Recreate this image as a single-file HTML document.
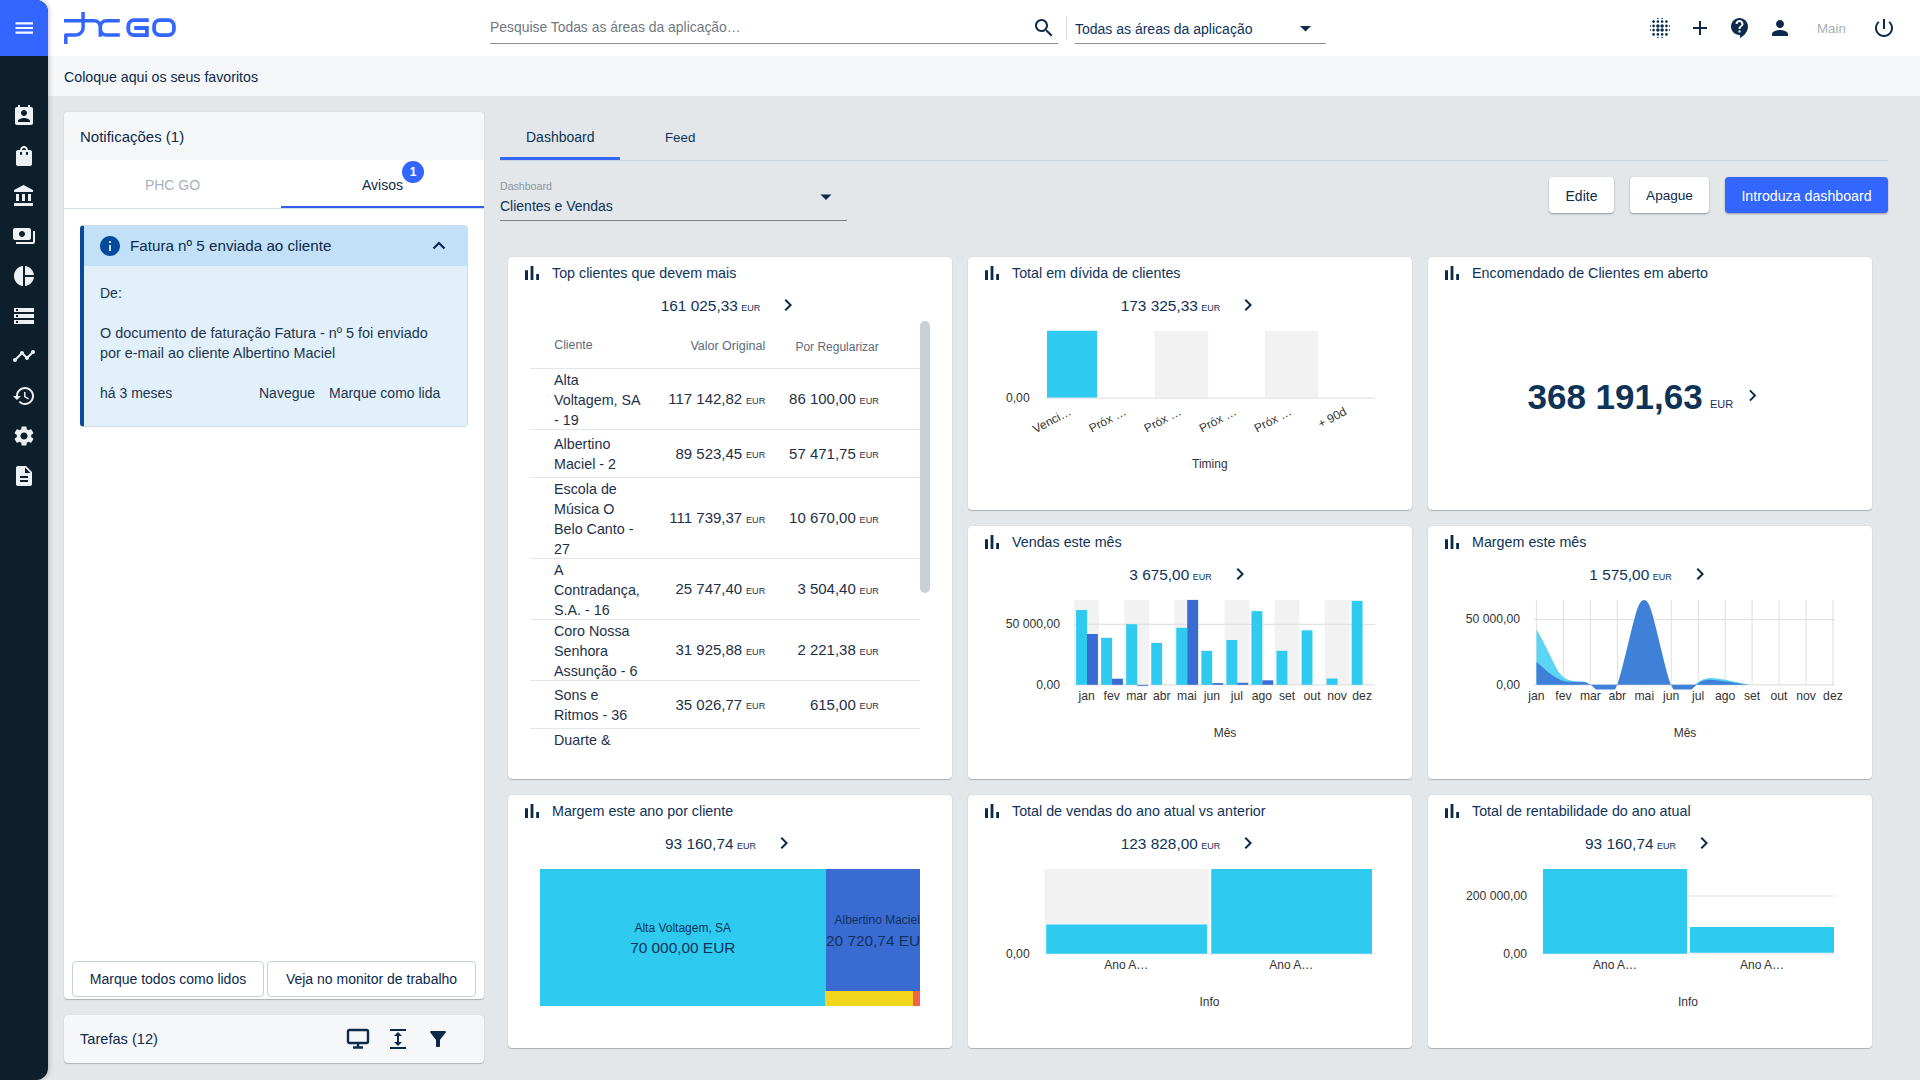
<!DOCTYPE html>
<html><head><meta charset="utf-8">
<style>
*{box-sizing:border-box;margin:0;padding:0}
html,body{width:1920px;height:1080px;overflow:hidden}
body{background:#e3e7ea;font-family:"Liberation Sans",sans-serif;color:#0b2a4c;position:relative;font-size:14px}
.a{position:absolute}
.nw{white-space:nowrap}
#side{left:0;top:0;width:48px;height:1080px;background:#0e1f2c;border-radius:0 12px 12px 0;overflow:hidden;z-index:5;box-shadow:1px 0 5px rgba(0,0,0,.22)}
#side .top{position:absolute;left:0;top:0;width:48px;height:56px;background:#3366ff}
#hdr{left:0;top:0;width:1920px;height:56px;background:#fff}
#fav{left:0;top:56px;width:1920px;height:40px;background:#f5f6f8}
.card{position:absolute;background:#fff;border-radius:4px;box-shadow:0 1px 1px rgba(0,0,0,.22),0 0 1px rgba(0,0,0,.18)}
</style></head><body>

<!-- header -->
<div id="hdr" class="a">
  <!-- logo -->
  <svg class="a" style="left:60px;top:8px" width="124" height="40" viewBox="60 8 124 40">
    <g fill="none" stroke="#3366ff" stroke-width="3.5">
      <path d="M64 20.7 H94.3 A6 6 0 0 1 100.3 26.7 V36.7"/>
      <path d="M119.8 20.7 H106.3 A6 6 0 0 0 100.3 26.7"/>
      <path d="M100.3 28.9 A6 6 0 0 0 106.3 34.9 H119.8"/>
      <path d="M83.07 12.1 V27.9 A7 7 0 0 1 76.07 34.9 H65.8 V44" stroke-linejoin="round"/>
    </g>
    <g fill="none" stroke="#3366ff" stroke-width="3.8">
      <path d="M148.8 20.1 H134 A5.7 5.7 0 0 0 128.3 25.8 V29.4 A5.7 5.7 0 0 0 134 35.1 H146.9 V28 H134.2"/>
      <path d="M159.8 20.1 H168.2 A5.7 5.7 0 0 1 173.9 25.8 V29.4 A5.7 5.7 0 0 1 168.2 35.1 H159.8 A5.7 5.7 0 0 1 154.1 29.4 V25.8 A5.7 5.7 0 0 1 159.8 20.1 Z"/>
    </g>
  </svg>
  <div class="a nw" style="left:490px;top:19px;font-size:13.9px;color:#6f7780">Pesquise Todas as áreas da aplicação…</div>
  <div class="a" style="left:490px;top:43px;width:568px;height:1px;background:#8e8e8e"></div>
  <svg class="a" style="left:1032px;top:16px" width="24" height="24" viewBox="0 0 24 24"><path fill="#0b2a4c" d="M15.5 14h-.79l-.28-.27C15.41 12.59 16 11.11 16 9.5 16 5.91 13.09 3 9.5 3S3 5.910 3 9.5 5.91 16 9.5 16c1.61 0 3.09-.59 4.23-1.57l.27.28v.79l5 4.99L20.49 19l-4.99-5zm-6 0C7.01 14 5 11.99 5 9.5S7.01 5 9.5 5 14 7.01 14 9.5 11.99 14 9.5 14z"/></svg>
  <div class="a" style="left:1066px;top:16px;width:1px;height:24px;background:#dcdcdc"></div>
  <div class="a nw" style="left:1075px;top:21px;font-size:14px;color:#0b3560">Todas as áreas da aplicação</div>
  <svg class="a" style="left:1299.5px;top:25px" width="12" height="8"><path d="M0 1 H11 L5.5 6.5Z" fill="#0b2a4c"/></svg>
  <div class="a" style="left:1075px;top:43px;width:251px;height:1px;background:#8e8e8e"></div>
  <!-- right icons -->
  <svg class="a" style="left:1646px;top:14px" width="28" height="28" viewBox="0 0 28 28" fill="#0b2a4c"><circle cx="11.9" cy="4.5" r="0.75"/><circle cx="16.1" cy="4.5" r="0.75"/><circle cx="7.6" cy="7.6" r="1.3"/><circle cx="11.9" cy="7.6" r="1.3"/><circle cx="16.1" cy="7.6" r="1.3"/><circle cx="20.4" cy="7.6" r="1.3"/><circle cx="4.5" cy="11.9" r="0.75"/><circle cx="7.6" cy="11.9" r="1.3"/><circle cx="11.9" cy="11.9" r="1.75"/><circle cx="16.1" cy="11.9" r="1.75"/><circle cx="20.4" cy="11.9" r="1.3"/><circle cx="23.5" cy="11.9" r="0.75"/><circle cx="4.5" cy="16.1" r="0.75"/><circle cx="7.6" cy="16.1" r="1.3"/><circle cx="11.9" cy="16.1" r="1.75"/><circle cx="16.1" cy="16.1" r="1.75"/><circle cx="20.4" cy="16.1" r="1.3"/><circle cx="23.5" cy="16.1" r="0.75"/><circle cx="7.6" cy="20.4" r="1.3"/><circle cx="11.9" cy="20.4" r="1.3"/><circle cx="16.1" cy="20.4" r="1.3"/><circle cx="20.4" cy="20.4" r="1.3"/><circle cx="11.9" cy="23.5" r="0.75"/><circle cx="16.1" cy="23.5" r="0.75"/></svg>
  <svg class="a" style="left:1688px;top:16px" width="24" height="24" viewBox="0 0 24 24"><path fill="#0b2a4c" d="M19 13h-6v6h-2v-6H5v-2h6V5h2v6h6v2z"/></svg>
  <svg class="a" style="left:1728px;top:16px" width="24" height="24" viewBox="0 0 24 24"><path fill="#0b2a4c" d="M11.5 2C6.81 2 3 5.81 3 10.5S6.81 19 11.5 19h.5v3c4.86-2.34 8-7 8-11.5C20 5.81 16.19 2 11.5 2zm1 14.5h-2v-2h2v2zm0-3.5h-2c0-3.25 3-3 3-5 0-1.1-.9-2-2-2s-2 .9-2 2h-2c0-2.21 1.79-4 4-4s4 1.790 4 4c0 2.5-3 2.75-3 5z"/></svg>
  <svg class="a" style="left:1768px;top:16px" width="24" height="24" viewBox="0 0 24 24"><path fill="#0b2a4c" d="M12 12c2.21 0 4-1.79 4-4s-1.79-4-4-4-4 1.79-4 4 1.79 4 4 4zm0 2c-2.67 0-8 1.34-8 4v2h16v-2c0-2.66-5.33-4-8-4z"/></svg>
  <div class="a nw" style="left:1817px;top:21px;font-size:13.3px;color:#a9b0b8">Main</div>
  <svg class="a" style="left:1872px;top:16px" width="24" height="24" viewBox="0 0 24 24"><path fill="#0b2a4c" d="M13 3h-2v10h2V3zm4.83 2.17l-1.42 1.42C17.99 7.86 19 9.81 19 12c0 3.87-3.13 7-7 7s-7-3.13-7-7c0-2.19 1.01-4.14 2.58-5.42L6.17 5.17C4.23 6.82 3 9.26 3 12c0 4.97 4.03 9 9 9s9-4.03 9-9c0-2.74-1.23-5.18-3.17-6.83z"/></svg>
</div>

<!-- favorites -->
<div id="fav" class="a"><div class="a nw" style="left:64px;top:13px;font-size:14.2px;color:#0b2a4c">Coloque aqui os seus favoritos</div></div>


<!-- MAIN START -->
<div class="a nw" style="left:526.00px;top:129.11px;font-size:14px;color:#0e3358;">Dashboard</div>
<div class="a nw" style="left:665.00px;top:129.75px;font-size:13.3px;color:#0e3358;">Feed</div>
<div class="a" style="left:500.00px;top:160.00px;width:1388.00px;height:1.00px;background:#c9d3dc;"></div>
<div class="a" style="left:500.00px;top:157.00px;width:120.00px;height:3.00px;background:#3366ff;"></div>
<div class="a nw" style="left:500.00px;top:180.14px;font-size:10.6px;color:#8a96a2;">Dashboard</div>
<div class="a nw" style="left:500.00px;top:197.91px;font-size:14px;color:#0e3358;">Clientes e Vendas</div>
<div class="a" style="left:500.00px;top:219.50px;width:347.00px;height:1.00px;background:#7f7f7f;"></div>
<svg class="a" style="left:820px;top:194px" width="12" height="7" viewBox="0 0 12 7"><path d="M0.5 0.5H11.5L6 6Z" fill="#0b2a4c"/></svg>
<div class="a" style="left:1549px;top:177px;width:65px;height:36px;background:#fff;border-radius:4px;box-shadow:0 1px 2px rgba(0,0,0,.35)"></div>
<div class="a" style="left:1630px;top:177px;width:79px;height:36px;background:#fff;border-radius:4px;box-shadow:0 1px 2px rgba(0,0,0,.35)"></div>
<div class="a" style="left:1725px;top:177px;width:163px;height:36px;background:#3366ff;border-radius:4px;box-shadow:0 1px 2px rgba(0,0,0,.35)"></div>
<div class="a nw" style="left:1281.50px;width:600px;text-align:center;top:188.11px;font-size:14px;color:#0b2a4c;">Edite</div>
<div class="a nw" style="left:1369.50px;width:600px;text-align:center;top:188.47px;font-size:13.6px;color:#0b2a4c;">Apague</div>
<div class="a nw" style="left:1506.50px;width:600px;text-align:center;top:187.92px;font-size:14.2px;color:#ffffff;">Introduza dashboard</div>
<div class="card" style="left:508px;top:257px;width:444px;height:522px"></div>
<svg class="a" style="left:520px;top:261px" width="24" height="24" viewBox="0 0 24 24"><path fill="#0b2a4c" d="M5 9.2h3V19H5zM10.6 5h2.8v14h-2.8zm5.6 8H19v6h-2.8z"/></svg>
<div class="a nw" style="left:552.00px;top:264.73px;font-size:14.3px;color:#0e3358;">Top clientes que devem mais</div>
<div class="a nw" style="left:660.76px;top:297.07px;font-size:15.4px;color:#0e3358;">161 025,33</div>
<div class="a nw" style="left:741.33px;top:302.96px;font-size:9px;color:#0e3358;">EUR</div>
<svg class="a" style="left:776.25px;top:293.20px" width="24" height="24" viewBox="0 0 24 24"><path fill="#0b2a4c" d="M10 6L8.59 7.41 13.17 12l-4.58 4.59L10 18l6-6z"/></svg>
<div class="card" style="left:968px;top:257px;width:444px;height:253px"></div>
<svg class="a" style="left:980px;top:261px" width="24" height="24" viewBox="0 0 24 24"><path fill="#0b2a4c" d="M5 9.2h3V19H5zM10.6 5h2.8v14h-2.8zm5.6 8H19v6h-2.8z"/></svg>
<div class="a nw" style="left:1012.00px;top:264.73px;font-size:14.3px;color:#0e3358;">Total em dívida de clientes</div>
<div class="a nw" style="left:1120.76px;top:297.07px;font-size:15.4px;color:#0e3358;">173 325,33</div>
<div class="a nw" style="left:1201.33px;top:302.96px;font-size:9px;color:#0e3358;">EUR</div>
<svg class="a" style="left:1236.25px;top:293.20px" width="24" height="24" viewBox="0 0 24 24"><path fill="#0b2a4c" d="M10 6L8.59 7.41 13.17 12l-4.58 4.59L10 18l6-6z"/></svg>
<div class="card" style="left:1428px;top:257px;width:444px;height:253px"></div>
<svg class="a" style="left:1440px;top:261px" width="24" height="24" viewBox="0 0 24 24"><path fill="#0b2a4c" d="M5 9.2h3V19H5zM10.6 5h2.8v14h-2.8zm5.6 8H19v6h-2.8z"/></svg>
<div class="a nw" style="left:1472.00px;top:264.73px;font-size:14.3px;color:#0e3358;">Encomendado de Clientes em aberto</div>
<div class="card" style="left:968px;top:526px;width:444px;height:253px"></div>
<svg class="a" style="left:980px;top:530px" width="24" height="24" viewBox="0 0 24 24"><path fill="#0b2a4c" d="M5 9.2h3V19H5zM10.6 5h2.8v14h-2.8zm5.6 8H19v6h-2.8z"/></svg>
<div class="a nw" style="left:1012.00px;top:533.73px;font-size:14.3px;color:#0e3358;">Vendas este mês</div>
<div class="a nw" style="left:1129.33px;top:566.07px;font-size:15.4px;color:#0e3358;">3 675,00</div>
<div class="a nw" style="left:1192.77px;top:571.96px;font-size:9px;color:#0e3358;">EUR</div>
<svg class="a" style="left:1227.68px;top:562.20px" width="24" height="24" viewBox="0 0 24 24"><path fill="#0b2a4c" d="M10 6L8.59 7.41 13.17 12l-4.58 4.59L10 18l6-6z"/></svg>
<div class="card" style="left:1428px;top:526px;width:444px;height:253px"></div>
<svg class="a" style="left:1440px;top:530px" width="24" height="24" viewBox="0 0 24 24"><path fill="#0b2a4c" d="M5 9.2h3V19H5zM10.6 5h2.8v14h-2.8zm5.6 8H19v6h-2.8z"/></svg>
<div class="a nw" style="left:1472.00px;top:533.73px;font-size:14.3px;color:#0e3358;">Margem este mês</div>
<div class="a nw" style="left:1589.33px;top:566.07px;font-size:15.4px;color:#0e3358;">1 575,00</div>
<div class="a nw" style="left:1652.77px;top:571.96px;font-size:9px;color:#0e3358;">EUR</div>
<svg class="a" style="left:1687.68px;top:562.20px" width="24" height="24" viewBox="0 0 24 24"><path fill="#0b2a4c" d="M10 6L8.59 7.41 13.17 12l-4.58 4.59L10 18l6-6z"/></svg>
<div class="card" style="left:508px;top:795px;width:444px;height:253px"></div>
<svg class="a" style="left:520px;top:799px" width="24" height="24" viewBox="0 0 24 24"><path fill="#0b2a4c" d="M5 9.2h3V19H5zM10.6 5h2.8v14h-2.8zm5.6 8H19v6h-2.8z"/></svg>
<div class="a nw" style="left:552.00px;top:802.73px;font-size:14.3px;color:#0e3358;">Margem este ano por cliente</div>
<div class="a nw" style="left:665.05px;top:835.07px;font-size:15.4px;color:#0e3358;">93 160,74</div>
<div class="a nw" style="left:737.05px;top:840.96px;font-size:9px;color:#0e3358;">EUR</div>
<svg class="a" style="left:771.96px;top:831.20px" width="24" height="24" viewBox="0 0 24 24"><path fill="#0b2a4c" d="M10 6L8.59 7.41 13.17 12l-4.58 4.59L10 18l6-6z"/></svg>
<div class="card" style="left:968px;top:795px;width:444px;height:253px"></div>
<svg class="a" style="left:980px;top:799px" width="24" height="24" viewBox="0 0 24 24"><path fill="#0b2a4c" d="M5 9.2h3V19H5zM10.6 5h2.8v14h-2.8zm5.6 8H19v6h-2.8z"/></svg>
<div class="a nw" style="left:1012.00px;top:802.73px;font-size:14.3px;color:#0e3358;">Total de vendas do ano atual vs anterior</div>
<div class="a nw" style="left:1120.76px;top:835.07px;font-size:15.4px;color:#0e3358;">123 828,00</div>
<div class="a nw" style="left:1201.33px;top:840.96px;font-size:9px;color:#0e3358;">EUR</div>
<svg class="a" style="left:1236.25px;top:831.20px" width="24" height="24" viewBox="0 0 24 24"><path fill="#0b2a4c" d="M10 6L8.59 7.41 13.17 12l-4.58 4.59L10 18l6-6z"/></svg>
<div class="card" style="left:1428px;top:795px;width:444px;height:253px"></div>
<svg class="a" style="left:1440px;top:799px" width="24" height="24" viewBox="0 0 24 24"><path fill="#0b2a4c" d="M5 9.2h3V19H5zM10.6 5h2.8v14h-2.8zm5.6 8H19v6h-2.8z"/></svg>
<div class="a nw" style="left:1472.00px;top:802.73px;font-size:14.3px;color:#0e3358;">Total de rentabilidade do ano atual</div>
<div class="a nw" style="left:1585.05px;top:835.07px;font-size:15.4px;color:#0e3358;">93 160,74</div>
<div class="a nw" style="left:1657.05px;top:840.96px;font-size:9px;color:#0e3358;">EUR</div>
<svg class="a" style="left:1691.96px;top:831.20px" width="24" height="24" viewBox="0 0 24 24"><path fill="#0b2a4c" d="M10 6L8.59 7.41 13.17 12l-4.58 4.59L10 18l6-6z"/></svg>
<div class="a nw" style="left:554.25px;top:338.27px;font-size:12.3px;color:#5b6b7c;">Cliente</div>
<div class="a nw" style="left:165.20px;width:600px;text-align:right;top:339.09px;font-size:12.5px;color:#5b6b7c;">Valor Original</div>
<div class="a nw" style="left:278.80px;width:600px;text-align:right;top:339.55px;font-size:12.0px;color:#5b6b7c;">Por Regularizar</div>
<div class="a" style="left:530px;top:322px;width:390px;height:430px;overflow:hidden">
<div class="a" style="left:0.00px;top:46.00px;width:390.00px;height:1.00px;background:#e3e6ea;"></div>
<div class="a nw" style="left:24.00px;top:49.73px;font-size:14.3px;color:#1e3048;">Alta</div>
<div class="a nw" style="left:24.00px;top:69.73px;font-size:14.3px;color:#1e3048;">Voltagem, SA</div>
<div class="a nw" style="left:24.00px;top:89.73px;font-size:14.3px;color:#1e3048;">- 19</div>
<div class="a nw" style="left:138.25px;top:68.09px;font-size:15px;color:#1e3048;">117 142,82</div>
<div class="a nw" style="left:216.00px;top:73.52px;font-size:9.1px;color:#1e3048;">EUR</div>
<div class="a nw" style="left:259.08px;top:68.09px;font-size:15px;color:#1e3048;">86 100,00</div>
<div class="a nw" style="left:329.60px;top:73.52px;font-size:9.1px;color:#1e3048;">EUR</div>
<div class="a" style="left:0.00px;top:107.00px;width:390.00px;height:1.00px;background:#e3e6ea;"></div>
<div class="a nw" style="left:24.00px;top:114.23px;font-size:14.3px;color:#1e3048;">Albertino</div>
<div class="a nw" style="left:24.00px;top:134.23px;font-size:14.3px;color:#1e3048;">Maciel - 2</div>
<div class="a nw" style="left:145.48px;top:122.59px;font-size:15px;color:#1e3048;">89 523,45</div>
<div class="a nw" style="left:216.00px;top:128.02px;font-size:9.1px;color:#1e3048;">EUR</div>
<div class="a nw" style="left:259.08px;top:122.59px;font-size:15px;color:#1e3048;">57 471,75</div>
<div class="a nw" style="left:329.60px;top:128.02px;font-size:9.1px;color:#1e3048;">EUR</div>
<div class="a" style="left:0.00px;top:155.00px;width:390.00px;height:1.00px;background:#e3e6ea;"></div>
<div class="a nw" style="left:24.00px;top:158.73px;font-size:14.3px;color:#1e3048;">Escola de</div>
<div class="a nw" style="left:24.00px;top:178.73px;font-size:14.3px;color:#1e3048;">Música O</div>
<div class="a nw" style="left:24.00px;top:198.73px;font-size:14.3px;color:#1e3048;">Belo Canto -</div>
<div class="a nw" style="left:24.00px;top:218.73px;font-size:14.3px;color:#1e3048;">27</div>
<div class="a nw" style="left:139.36px;top:187.09px;font-size:15px;color:#1e3048;">111 739,37</div>
<div class="a nw" style="left:216.00px;top:192.52px;font-size:9.1px;color:#1e3048;">EUR</div>
<div class="a nw" style="left:259.08px;top:187.09px;font-size:15px;color:#1e3048;">10 670,00</div>
<div class="a nw" style="left:329.60px;top:192.52px;font-size:9.1px;color:#1e3048;">EUR</div>
<div class="a" style="left:0.00px;top:236.00px;width:390.00px;height:1.00px;background:#e3e6ea;"></div>
<div class="a nw" style="left:24.00px;top:239.73px;font-size:14.3px;color:#1e3048;">A</div>
<div class="a nw" style="left:24.00px;top:259.73px;font-size:14.3px;color:#1e3048;">Contradança,</div>
<div class="a nw" style="left:24.00px;top:279.73px;font-size:14.3px;color:#1e3048;">S.A. - 16</div>
<div class="a nw" style="left:145.48px;top:258.08px;font-size:15px;color:#1e3048;">25 747,40</div>
<div class="a nw" style="left:216.00px;top:263.52px;font-size:9.1px;color:#1e3048;">EUR</div>
<div class="a nw" style="left:267.42px;top:258.08px;font-size:15px;color:#1e3048;">3 504,40</div>
<div class="a nw" style="left:329.60px;top:263.52px;font-size:9.1px;color:#1e3048;">EUR</div>
<div class="a" style="left:0.00px;top:297.00px;width:390.00px;height:1.00px;background:#e3e6ea;"></div>
<div class="a nw" style="left:24.00px;top:300.73px;font-size:14.3px;color:#1e3048;">Coro Nossa</div>
<div class="a nw" style="left:24.00px;top:320.73px;font-size:14.3px;color:#1e3048;">Senhora</div>
<div class="a nw" style="left:24.00px;top:340.73px;font-size:14.3px;color:#1e3048;">Assunção - 6</div>
<div class="a nw" style="left:145.48px;top:319.08px;font-size:15px;color:#1e3048;">31 925,88</div>
<div class="a nw" style="left:216.00px;top:324.52px;font-size:9.1px;color:#1e3048;">EUR</div>
<div class="a nw" style="left:267.42px;top:319.08px;font-size:15px;color:#1e3048;">2 221,38</div>
<div class="a nw" style="left:329.60px;top:324.52px;font-size:9.1px;color:#1e3048;">EUR</div>
<div class="a" style="left:0.00px;top:358.00px;width:390.00px;height:1.00px;background:#e3e6ea;"></div>
<div class="a nw" style="left:24.00px;top:365.23px;font-size:14.3px;color:#1e3048;">Sons e</div>
<div class="a nw" style="left:24.00px;top:385.23px;font-size:14.3px;color:#1e3048;">Ritmos - 36</div>
<div class="a nw" style="left:145.48px;top:373.58px;font-size:15px;color:#1e3048;">35 026,77</div>
<div class="a nw" style="left:216.00px;top:379.02px;font-size:9.1px;color:#1e3048;">EUR</div>
<div class="a nw" style="left:279.93px;top:373.58px;font-size:15px;color:#1e3048;">615,00</div>
<div class="a nw" style="left:329.60px;top:379.02px;font-size:9.1px;color:#1e3048;">EUR</div>
<div class="a" style="left:0.00px;top:406.00px;width:390.00px;height:1.00px;background:#e3e6ea;"></div>
<div class="a nw" style="left:24.00px;top:409.73px;font-size:14.3px;color:#1e3048;">Duarte &</div>
<div class="a nw" style="left:24.00px;top:429.73px;font-size:14.3px;color:#1e3048;">Filhos, Lda</div>
<div class="a nw" style="left:24.00px;top:449.73px;font-size:14.3px;color:#1e3048;">- 5</div>
<div class="a nw" style="left:145.48px;top:428.08px;font-size:15px;color:#1e3048;">20 000,00</div>
<div class="a nw" style="left:216.00px;top:433.52px;font-size:9.1px;color:#1e3048;">EUR</div>
<div class="a nw" style="left:279.93px;top:428.08px;font-size:15px;color:#1e3048;">500,00</div>
<div class="a nw" style="left:329.60px;top:433.52px;font-size:9.1px;color:#1e3048;">EUR</div>
<div class="a" style="left:0.00px;top:467.00px;width:390.00px;height:1.00px;background:#e3e6ea;"></div>
</div>
<div class="a" style="left:920px;top:321px;width:10px;height:272px;border-radius:5px;background:#c9d0d7"></div>
<svg class="a" style="left:968px;top:257px" width="444" height="253" viewBox="968 257 444 253" font-family="Liberation Sans, sans-serif"><rect x="1154.67" y="330.75" width="53.58" height="67.25" fill="#f2f2f2"/><rect x="1264.83" y="330.75" width="53.58" height="67.25" fill="#f2f2f2"/><rect x="1047" y="330.75" width="50" height="67.25" fill="#2fcaf0"/><rect x="1044.5" y="397.5" width="330.5" height="1.3" fill="#e6e6e6"/><text x="1029.70" y="401.60" font-size="12.2" fill="#333" text-anchor="end" >0,00</text><text x="1072.04" y="414.00" font-size="12" fill="#333" text-anchor="end" transform="rotate(-28 1072.04 414)">Venci…</text><text x="1127.12" y="414.00" font-size="12" fill="#333" text-anchor="end" transform="rotate(-28 1127.12 414)">Próx …</text><text x="1182.21" y="414.00" font-size="12" fill="#333" text-anchor="end" transform="rotate(-28 1182.21 414)">Próx …</text><text x="1237.29" y="414.00" font-size="12" fill="#333" text-anchor="end" transform="rotate(-28 1237.29 414)">Próx …</text><text x="1292.38" y="414.00" font-size="12" fill="#333" text-anchor="end" transform="rotate(-28 1292.38 414)">Próx …</text><text x="1347.46" y="414.00" font-size="12" fill="#333" text-anchor="end" transform="rotate(-28 1347.46 414)">+ 90d</text><text x="1209.80" y="467.50" font-size="12" fill="#333" text-anchor="middle" >Timing</text></svg>
<div class="a nw" style="left:1527.50px;top:376.51px;font-size:35px;color:#0e3358;font-weight:700;">368 191,63</div>
<div class="a nw" style="left:1710.00px;top:398.07px;font-size:11px;color:#0e3358;">EUR</div>
<svg class="a" style="left:1740.5px;top:384.25px" width="23" height="23" viewBox="0 0 24 24"><path fill="#0b2a4c" d="M10 6L8.59 7.41 13.17 12l-4.58 4.59L10 18l6-6z"/></svg>
<svg class="a" style="left:968px;top:526px" width="444" height="253" viewBox="968 526 444 253" font-family="Liberation Sans, sans-serif"><rect x="1074.10" y="599.9" width="25.05" height="85" fill="#f2f2f2"/><rect x="1124.20" y="599.9" width="25.05" height="85" fill="#f2f2f2"/><rect x="1174.30" y="599.9" width="25.05" height="85" fill="#f2f2f2"/><rect x="1224.40" y="599.9" width="25.05" height="85" fill="#f2f2f2"/><rect x="1274.50" y="599.9" width="25.05" height="85" fill="#f2f2f2"/><rect x="1324.60" y="599.9" width="25.05" height="85" fill="#f2f2f2"/><rect x="1074" y="623.8" width="301" height="1.2" fill="#e2e2e2"/><rect x="1074" y="684.2" width="301" height="1.3" fill="#e2e2e2"/><rect x="1076.10" y="610.00" width="10.9" height="74.80" fill="#2fcaf0"/><rect x="1087.00" y="634.00" width="10.9" height="50.80" fill="#3a6bd3"/><rect x="1101.15" y="637.80" width="10.9" height="47.00" fill="#2fcaf0"/><rect x="1112.05" y="678.70" width="10.9" height="6.10" fill="#3a6bd3"/><rect x="1126.20" y="624.20" width="10.9" height="60.60" fill="#2fcaf0"/><rect x="1151.25" y="642.90" width="10.9" height="41.90" fill="#2fcaf0"/><rect x="1176.30" y="627.80" width="10.9" height="57.00" fill="#2fcaf0"/><rect x="1187.20" y="599.90" width="10.9" height="84.90" fill="#3a6bd3"/><rect x="1201.35" y="650.80" width="10.9" height="34.00" fill="#2fcaf0"/><rect x="1212.25" y="683.10" width="10.9" height="1.70" fill="#3a6bd3"/><rect x="1226.40" y="640.00" width="10.9" height="44.80" fill="#2fcaf0"/><rect x="1237.30" y="682.80" width="10.9" height="2.00" fill="#3a6bd3"/><rect x="1251.45" y="611.10" width="10.9" height="73.70" fill="#2fcaf0"/><rect x="1262.35" y="680.30" width="10.9" height="4.50" fill="#3a6bd3"/><rect x="1276.50" y="650.80" width="10.9" height="34.00" fill="#2fcaf0"/><rect x="1301.55" y="630.30" width="10.9" height="54.50" fill="#2fcaf0"/><rect x="1326.60" y="678.50" width="10.9" height="6.30" fill="#2fcaf0"/><rect x="1351.65" y="600.80" width="10.9" height="84.00" fill="#2fcaf0"/><rect x="1137.10" y="684.8" width="10.9" height="1.3" fill="#6a8fe0"/><text x="1060.00" y="627.90" font-size="12.2" fill="#333" text-anchor="end" >50 000,00</text><text x="1060.00" y="689.20" font-size="12.2" fill="#333" text-anchor="end" >0,00</text><text x="1086.62" y="700.10" font-size="12.2" fill="#333" text-anchor="middle" >jan</text><text x="1111.67" y="700.10" font-size="12.2" fill="#333" text-anchor="middle" >fev</text><text x="1136.72" y="700.10" font-size="12.2" fill="#333" text-anchor="middle" >mar</text><text x="1161.77" y="700.10" font-size="12.2" fill="#333" text-anchor="middle" >abr</text><text x="1186.82" y="700.10" font-size="12.2" fill="#333" text-anchor="middle" >mai</text><text x="1211.88" y="700.10" font-size="12.2" fill="#333" text-anchor="middle" >jun</text><text x="1236.92" y="700.10" font-size="12.2" fill="#333" text-anchor="middle" >jul</text><text x="1261.97" y="700.10" font-size="12.2" fill="#333" text-anchor="middle" >ago</text><text x="1287.02" y="700.10" font-size="12.2" fill="#333" text-anchor="middle" >set</text><text x="1312.07" y="700.10" font-size="12.2" fill="#333" text-anchor="middle" >out</text><text x="1337.12" y="700.10" font-size="12.2" fill="#333" text-anchor="middle" >nov</text><text x="1362.17" y="700.10" font-size="12.2" fill="#333" text-anchor="middle" >dez</text><text x="1225.00" y="737.00" font-size="12" fill="#333" text-anchor="middle" >Mês</text></svg>
<svg class="a" style="left:1428px;top:526px" width="444" height="253" viewBox="1428 526 444 253" font-family="Liberation Sans, sans-serif"><rect x="1535.90" y="600" width="1.2" height="85" fill="#e4e4e4"/><rect x="1562.85" y="600" width="1.2" height="85" fill="#e4e4e4"/><rect x="1589.80" y="600" width="1.2" height="85" fill="#e4e4e4"/><rect x="1616.75" y="600" width="1.2" height="85" fill="#e4e4e4"/><rect x="1643.70" y="600" width="1.2" height="85" fill="#e4e4e4"/><rect x="1670.65" y="600" width="1.2" height="85" fill="#e4e4e4"/><rect x="1697.60" y="600" width="1.2" height="85" fill="#e4e4e4"/><rect x="1724.55" y="600" width="1.2" height="85" fill="#e4e4e4"/><rect x="1751.50" y="600" width="1.2" height="85" fill="#e4e4e4"/><rect x="1778.45" y="600" width="1.2" height="85" fill="#e4e4e4"/><rect x="1805.40" y="600" width="1.2" height="85" fill="#e4e4e4"/><rect x="1832.35" y="600" width="1.2" height="85" fill="#e4e4e4"/><rect x="1534" y="618.9" width="301" height="1.2" fill="#e2e2e2"/><rect x="1534" y="684.2" width="301" height="1.3" fill="#e2e2e2"/><path fill="#5cd5f5" d="M1536.5 684.8 V629.3 C1543 640 1552 660 1558 671 C1563 678 1568 681.5 1580 681.8 L1580 684.8 Z"/><path fill="#5cd5f5" d="M1694.5 684.8 C1700 680 1706 678 1711 678 C1722 678 1740 683.5 1751 684.8 Z"/><path fill="#3f80d8" d="M1536.5 684.8 L1536.5 661.7 C1546 670 1555 679.5 1566 681.5 C1575 682.5 1580 681 1585 682 C1588 683 1590 684.5 1591 685 L1596 689.6 L1615 689.6 L1617.3 684.8 C1622 672 1631 630 1636 613 C1639 603 1641.5 600.1 1644.1 600.1 C1646.7 600.1 1649.2 603 1652 613 C1657 630 1666 672 1670.9 684.8 L1673.3 689.6 L1691.7 689.6 L1696.7 684.4 C1701 681 1705 679.7 1709 679.7 C1720 679.7 1740 684 1751 684.8 Z"/><text x="1520.00" y="623.10" font-size="12.2" fill="#333" text-anchor="end" >50 000,00</text><text x="1520.00" y="689.20" font-size="12.2" fill="#333" text-anchor="end" >0,00</text><text x="1536.50" y="700.10" font-size="12.2" fill="#333" text-anchor="middle" >jan</text><text x="1563.45" y="700.10" font-size="12.2" fill="#333" text-anchor="middle" >fev</text><text x="1590.40" y="700.10" font-size="12.2" fill="#333" text-anchor="middle" >mar</text><text x="1617.35" y="700.10" font-size="12.2" fill="#333" text-anchor="middle" >abr</text><text x="1644.30" y="700.10" font-size="12.2" fill="#333" text-anchor="middle" >mai</text><text x="1671.25" y="700.10" font-size="12.2" fill="#333" text-anchor="middle" >jun</text><text x="1698.20" y="700.10" font-size="12.2" fill="#333" text-anchor="middle" >jul</text><text x="1725.15" y="700.10" font-size="12.2" fill="#333" text-anchor="middle" >ago</text><text x="1752.10" y="700.10" font-size="12.2" fill="#333" text-anchor="middle" >set</text><text x="1779.05" y="700.10" font-size="12.2" fill="#333" text-anchor="middle" >out</text><text x="1806.00" y="700.10" font-size="12.2" fill="#333" text-anchor="middle" >nov</text><text x="1832.95" y="700.10" font-size="12.2" fill="#333" text-anchor="middle" >dez</text><text x="1685.00" y="737.00" font-size="12" fill="#333" text-anchor="middle" >Mês</text></svg>
<div class="a" style="left:540.00px;top:869.00px;width:285.75px;height:136.75px;background:#2fcaf0;"></div>
<div class="a" style="left:825.75px;top:869.00px;width:94.25px;height:122.25px;background:#3a6bd3;"></div>
<div class="a" style="left:825.25px;top:991.25px;width:87.75px;height:14.50px;background:#f2d51d;"></div>
<div class="a" style="left:913.00px;top:991.25px;width:7.00px;height:14.50px;background:#f26449;"></div>
<div class="a nw" style="left:382.75px;width:600px;text-align:center;top:920.65px;font-size:12px;color:#0e3358;">Alta Voltagem, SA</div>
<div class="a nw" style="left:382.75px;width:600px;text-align:center;top:938.92px;font-size:15.4px;color:#0e3358;">70 000,00 EUR</div>
<div class="a" style="left:825.75px;top:869px;width:94.25px;height:122px;overflow:hidden">
<div class="a nw" style="left:8.75px;top:43.75px;font-size:12px;color:#0e3358;">Albertino Maciel</div>
<div class="a nw" style="left:0.25px;top:63.12px;font-size:15.4px;color:#0e3358;">20 720,74 EUR</div>
</div>
<svg class="a" style="left:968px;top:795px" width="444" height="253" viewBox="968 795 444 253" font-family="Liberation Sans, sans-serif"><rect x="1044.5" y="869" width="164.25" height="84.75" fill="#f2f2f2"/><rect x="1044.5" y="953.2" width="330.5" height="1.3" fill="#eeeeee"/><rect x="1046.25" y="924.5" width="160.75" height="29.25" fill="#2fcaf0"/><rect x="1211.25" y="869" width="160.75" height="84.75" fill="#2fcaf0"/><text x="1029.70" y="958.00" font-size="12.2" fill="#333" text-anchor="end" >0,00</text><text x="1126.25" y="968.80" font-size="12" fill="#333" text-anchor="middle" >Ano A…</text><text x="1291.25" y="968.80" font-size="12" fill="#333" text-anchor="middle" >Ano A…</text><text x="1209.50" y="1006.30" font-size="12" fill="#333" text-anchor="middle" >Info</text></svg>
<svg class="a" style="left:1428px;top:795px" width="444" height="253" viewBox="1428 795 444 253" font-family="Liberation Sans, sans-serif"><rect x="1541.25" y="895.4" width="293.75" height="1.2" fill="#e6e6e6"/><rect x="1541.25" y="953.2" width="293.75" height="1.3" fill="#eeeeee"/><rect x="1543" y="869" width="144" height="84.75" fill="#2fcaf0"/><rect x="1690" y="927" width="144" height="25.75" fill="#2fcaf0"/><text x="1527.00" y="900.10" font-size="12.2" fill="#333" text-anchor="end" >200 000,00</text><text x="1527.00" y="958.00" font-size="12.2" fill="#333" text-anchor="end" >0,00</text><text x="1615.00" y="968.80" font-size="12" fill="#333" text-anchor="middle" >Ano A…</text><text x="1762.00" y="968.80" font-size="12" fill="#333" text-anchor="middle" >Ano A…</text><text x="1688.00" y="1006.30" font-size="12" fill="#333" text-anchor="middle" >Info</text></svg>
<!-- MAIN END -->
<!-- left notifications panel -->
<div class="card" style="left:64px;top:112px;width:420px;height:887px;overflow:hidden">
  <div class="a" style="left:0;top:0;width:420px;height:48px;background:#f6f7f9"></div>
  <div class="a nw" style="left:16px;top:16px;font-size:15px;color:#0b2a4c">Notificações (1)</div>
  <div class="a nw" style="left:0;top:65px;width:217px;text-align:center;font-size:14px;color:#a6b1bc">PHC GO</div>
  <div class="a nw" style="left:217px;top:65px;width:203px;text-align:center;font-size:14px;color:#0b2a4c">Avisos</div>
  <div class="a" style="left:338px;top:49px;width:22px;height:22px;border-radius:50%;background:#3366ff;color:#fff;font-size:12px;font-weight:700;text-align:center;line-height:22px">1</div>
  <div class="a" style="left:0;top:96px;width:420px;height:1px;background:#d5dde5"></div>
  <div class="a" style="left:217px;top:94px;width:203px;height:2px;background:#2f5ff5"></div>
  <!-- notification -->
  <div class="a" style="left:16px;top:113px;width:388px;height:202px;background:#e1f0fa;border-radius:4px;border:1px solid #cfdbe6;border-left:4px solid #0a4a9a;overflow:hidden">
    <div class="a" style="left:0;top:0;width:384px;height:40px;background:#c2e1f8"></div>
  </div>
  <svg class="a" style="left:34px;top:122px" width="24" height="24" viewBox="0 0 24 24"><path fill="#044a9c" d="M12 2C6.48 2 2 6.48 2 12s4.48 10 10 10 10-4.48 10-10S17.52 2 12 2zm1 15h-2v-6h2v6zm0-8h-2V7h2v2z"/></svg>
  <div class="a nw" style="left:66px;top:125.3px;font-size:15.2px;color:#0b2a4c">Fatura nº 5 enviada ao cliente</div>
  <svg class="a" style="left:368px;top:129px" width="14" height="9" viewBox="0 0 14 9"><path d="M1.5 7.5 L7 2 L12.5 7.5" fill="none" stroke="#0b2a4c" stroke-width="2.2"/></svg>
  <div class="a nw" style="left:36px;top:173px;font-size:14px;color:#1e3550">De:</div>
  <div class="a nw" style="left:36px;top:211px;font-size:14.4px;line-height:20px;color:#1e3550">O documento de faturação Fatura - nº 5 foi enviado<br>por e-mail ao cliente Albertino Maciel</div>
  <div class="a nw" style="left:36px;top:273px;font-size:14px;color:#1e3550">há 3 meses</div>
  <div class="a nw" style="left:195px;top:273px;font-size:14px;color:#1e3550">Navegue</div>
  <div class="a nw" style="left:265px;top:273px;font-size:14px;color:#1e3550">Marque como lida</div>
  <!-- bottom buttons -->
  <div class="a nw" style="left:8px;top:849px;width:192px;height:36px;border:1px solid #c8d0d9;border-radius:4px;background:#fff;text-align:center;line-height:34px;font-size:14px;color:#0b2a4c">Marque todos como lidos</div>
  <div class="a nw" style="left:203px;top:849px;width:209px;height:36px;border:1px solid #c8d0d9;border-radius:4px;background:#fff;text-align:center;line-height:34px;font-size:14px;color:#0b2a4c">Veja no monitor de trabalho</div>
</div>
<!-- tarefas -->
<div class="card" style="left:64px;top:1015px;width:420px;height:48px;background:#f6f7f9">
  <div class="a nw" style="left:16px;top:16px;font-size:14.6px;color:#0b2a4c">Tarefas (12)</div>
  <svg class="a" style="left:282px;top:13px" width="24" height="22" viewBox="0 0 24 22"><rect x="2" y="2" width="20" height="13" rx="1.5" fill="none" stroke="#0b2a4c" stroke-width="2.4"/><path d="M12 15V19M7 19.5H17" stroke="#0b2a4c" stroke-width="2.4"/></svg>
  <svg class="a" style="left:321.9px;top:11.8px" width="24" height="24" viewBox="0 0 24 24"><path fill="#0b2a4c" d="M4 20h16v2H4zM4 2h16v2H4zm9 7h3l-4-4-4 4h3v6H8l4 4 4-4h-3z"/></svg>
  <svg class="a" style="left:362.1px;top:12.2px" width="24" height="24" viewBox="0 0 24 24"><path fill="#0b2a4c" d="M4.25 5.61C6.27 8.2 10 13 10 13v6c0 .55.45 1 1 1h2c.55 0 1-.45 1-1v-6s3.72-4.8 5.74-7.39c.51-.66.04-1.61-.79-1.61H5.04c-.83 0-1.3.95-.79 1.61z"/></svg>
</div>

<!-- sidebar -->
<div id="side" class="a">
  <div class="top"></div>
  <svg class="a" style="left:12px;top:104px" width="24" height="24" viewBox="0 0 24 24"><path fill="#eef1f4" d="M19 3h-1V1h-2v2H8V1H6v2H5c-1.11 0-2 .9-2 2v14c0 1.1.89 2 2 2h14c1.1 0 2-.9 2-2V5c0-1.1-.9-2-2-2zm-7 3c1.66 0 3 1.34 3 3s-1.34 3-3 3-3-1.34-3-3 1.34-3 3-3zm6 12H6v-1c0-2 4-3.1 6-3.1s6 1.1 6 3.1v1z"/></svg>
  <svg class="a" style="left:12px;top:144px" width="24" height="24" viewBox="0 0 24 24"><path fill="#eef1f4" d="M18 6h-2c0-2.21-1.79-4-4-4S8 3.79 8 6H6c-1.1 0-2 .9-2 2v12c0 1.1.9 2 2 2h12c1.1 0 2-.9 2-2V8c0-1.1-.9-2-2-2zm-8 4c0 .55-.45 1-1 1s-1-.45-1-1V8h2v2zm2-6c1.1 0 2 .9 2 2h-4c0-1.1.9-2 2-2zm4 6c0 .55-.45 1-1 1s-1-.45-1-1V8h2v2z"/></svg>
  <svg class="a" style="left:12px;top:184px" width="24" height="24" viewBox="0 0 24 24"><path fill="#eef1f4" d="M4 10v7h3v-7H4zm6 0v7h3v-7h-3zM2 22h19v-3H2v3zm14-12v7h3v-7h-3zm-4.5-9L2 6v2h19V6l-9.5-5z"/></svg>
  <svg class="a" style="left:12px;top:224px" width="24" height="24" viewBox="0 0 24 24"><path fill="#eef1f4" d="M19 14V6c0-1.1-.9-2-2-2H3c-1.1 0-2 .9-2 2v8c0 1.1.9 2 2 2h14c1.1 0 2-.9 2-2zm-9-1c-1.66 0-3-1.34-3-3s1.34-3 3-3 3 1.34 3 3-1.34 3-3 3zm13-6v11c0 1.1-.9 2-2 2H4v-2h17V7h2z"/></svg>
  <svg class="a" style="left:12px;top:264px" width="24" height="24" viewBox="0 0 24 24"><path fill="#eef1f4" d="M11 2v20c-5.07-.5-9-4.79-9-10s3.93-9.5 9-10zm2.03 0v8.99H22c-.47-4.74-4.24-8.52-8.97-8.99zm0 11.01V22c4.74-.47 8.5-4.25 8.97-8.99h-8.97z"/></svg>
  <svg class="a" style="left:12px;top:304px" width="24" height="24" viewBox="0 0 24 24"><path fill="#eef1f4" d="M2 20h20v-4H2v4zm2-3h2v2H4v-2zM2 4v4h20V4H2zm4 3H4V5h2v2zm-4 7h20v-4H2v4zm2-3h2v2H4v-2z"/></svg>
  <svg class="a" style="left:12px;top:344px" width="24" height="24" viewBox="0 0 24 24"><path fill="#eef1f4" d="M23 8c0 1.1-.9 2-2 2-.18 0-.35-.02-.51-.07l-3.56 3.55c.05.16.07.34.07.52 0 1.1-.9 2-2 2s-2-.9-2-2c0-.18.02-.36.07-.52l-2.55-2.55c-.16.05-.34.07-.52.07s-.36-.02-.52-.07l-4.55 4.56c.05.16.07.33.07.51 0 1.1-.9 2-2 2s-2-.9-2-2 .9-2 2-2c.18 0 .35.02.51.07l4.56-4.55C8.02 9.36 8 9.18 8 9c0-1.1.9-2 2-2s2 .9 2 2c0 .18-.02.36-.07.52l2.55 2.55c.16-.05.34-.07.52-.07s.36.02.52.07l3.55-3.56C19.02 8.350 19 8.18 19 8c0-1.1.9-2 2-2s2 .9 2 2z"/></svg>
  <svg class="a" style="left:12px;top:384px" width="24" height="24" viewBox="0 0 24 24"><path fill="#eef1f4" d="M13 3c-4.97 0-9 4.03-9 9H1l3.89 3.89.07.14L9 12H6c0-3.87 3.13-7 7-7s7 3.13 7 7-3.130 7-7 7c-1.93 0-3.68-.79-4.94-2.06l-1.42 1.42C8.27 19.99 10.51 21 13 21c4.97 0 9-4.03 9-9s-4.03-9-9-9zm-1 5v5l4.28 2.54.72-1.21-3.5-2.08V8H12z"/></svg>
  <svg class="a" style="left:12px;top:424px" width="24" height="24" viewBox="0 0 24 24"><path fill="#eef1f4" d="M19.14 12.94c.04-.3.06-.61.06-.94 0-.32-.02-.64-.07-.94l2.03-1.58c.18-.14.23-.41.12-.61l-1.92-3.32c-.12-.22-.37-.29-.59-.22l-2.39.96c-.5-.38-1.03-.7-1.62-.94L14.4 2.81c-.04-.24-.24-.41-.48-.41h-3.84c-.24 0-.43.17-.47.41L9.25 5.35C8.66 5.59 8.12 5.92 7.63 6.29L5.24 5.33c-.22-.08-.47 0-.59.22L2.74 8.87C2.62 9.08 2.66 9.34 2.86 9.48l2.03 1.58C4.84 11.36 4.8 11.69 4.8 12s.02.64.07.94l-2.03 1.58c-.18.14-.23.41-.12.61l1.92 3.32c.12.22.37.29.59.22l2.39-.96c.5.38 1.03.7 1.62.94l.36 2.54c.05.24.24.41.48.41h3.84c.24 0 .44-.17.47-.41l.36-2.54c.59-.24 1.13-.56 1.62-.94l2.39.96c.22.08.47 0 .59-.22l1.92-3.32c.12-.22.07-.47-.12-.61l-2.01-1.58zM12 15.6c-1.98 0-3.6-1.62-3.6-3.6s1.62-3.6 3.6-3.6 3.6 1.62 3.6 3.6-1.62 3.6-3.6 3.6z"/></svg>
  <svg class="a" style="left:12px;top:464px" width="24" height="24" viewBox="0 0 24 24"><path fill="#eef1f4" d="M14 2H6c-1.1 0-1.99.9-1.99 2L4 20c0 1.1.89 2 1.99 2H18c1.1 0 2-.9 2-2V8l-6-6zm2 16H8v-2h8v2zm0-4H8v-2h8v2zm-3-5V3.5L18.5 9H13z"/></svg>
  <svg class="a" style="left:14px;top:20px" width="20" height="16"><path d="M1.5 3.4H19M1.5 8H19M1.5 12.6H19" stroke="#f4f6f8" stroke-width="2.2"/></svg>
</div>

</body></html>
